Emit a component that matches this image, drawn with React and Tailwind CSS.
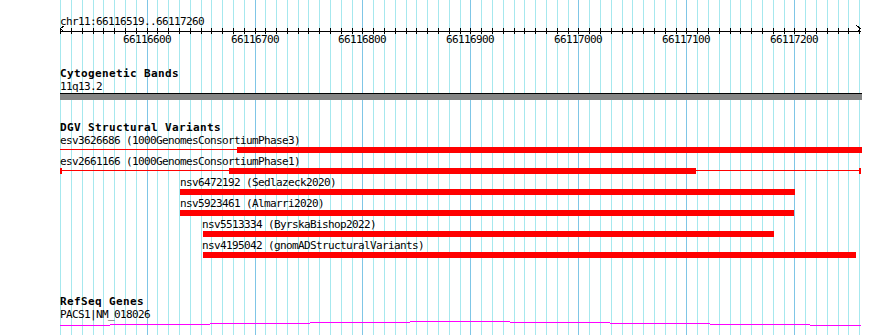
import React from 'react';

const START = 66116519;
const END = 66117260;
const SCALE = 800 / 741;
const LEFT = 60;

// screen x of a base position
const px = (bp) => Math.floor(59.6 + (bp - START) * SCALE);

const gridBp = [];
for (let bp = 66116520; bp <= END; bp += 10) gridBp.push(bp);

const majorBp = [66116600, 66116700, 66116800, 66116900, 66117000, 66117100, 66117200];

const variants = [
    { label: 'esv3626686 (1000GenomesConsortiumPhase3)', x: 60, thin: [60, 237], thick: [237, 862] },
    { label: 'esv2661166 (1000GenomesConsortiumPhase1)', x: 60, thin: [60, 860], thick: [229, 696], ends: [60, 859] },
    { label: 'nsv6472192 (Sedlazeck2020)', x: 180, thick: [180, 795] },
    { label: 'nsv5923461 (Almarri2020)', x: 180, thick: [180, 794] },
    { label: 'nsv5513334 (ByrskaBishop2022)', x: 202, thick: [203, 774] },
    { label: 'nsv4195042 (gnomADStructuralVariants)', x: 202, thick: [203, 856] },
];

// intron line of the gene, drawn as small steps
const geneSteps = [
    [60, 110, 4], [110, 210, 3], [210, 310, 2], [310, 410, 1], [410, 510, 0],
    [510, 610, 1], [610, 710, 2], [710, 810, 3], [810, 861, 4],
];

function Grid() {
    return (
        <svg className="absolute inset-0" width="890" height="335" shapeRendering="crispEdges">
            {gridBp.map((bp) => (
                <line
                    key={bp}
                    x1={px(bp) + 0.5}
                    x2={px(bp) + 0.5}
                    y1="0"
                    y2="335"
                    stroke={bp % 100 === 0 ? '#7fc6e6' : '#a6e8ee'}
                    strokeWidth="1"
                />
            ))}
        </svg>
    );
}

function Ruler() {
    return (
        <div className="flex flex-col">
            <div className="h-[13px] leading-[13px] text-[11px] tracking-[-0.62px] mt-[15px]">chr11:66116519..66117260</div>
            <svg width="802" height="6" shapeRendering="crispEdges" className="block">
                <line x1="0" x2="801" y1="3.5" y2="3.5" stroke="#000" />
                {gridBp.map((bp) => (
                    <line key={bp} x1={px(bp) - LEFT + 0.5} x2={px(bp) - LEFT + 0.5} y1="0" y2="6" stroke="#000" />
                ))}
            </svg>
            <svg width="802" height="8" className="absolute mt-[25px]" shapeRendering="crispEdges">
                <polyline points="4.5,0.5 0.5,3.5 4.5,7.5" fill="none" stroke="#000" />
                <polyline points="796.5,0.5 800.5,3.5 796.5,7.5" fill="none" stroke="#000" />
            </svg>
            <div className="relative h-[13px] leading-[13px] text-[11px] tracking-[-0.62px] -mt-px">
                {majorBp.map((bp) => (
                    <span key={bp} className="absolute top-0" style={{ left: px(bp) - LEFT - 24 }}>
                        {bp}
                    </span>
                ))}
            </div>
        </div>
    );
}

function TrackTitle({ children, className }) {
    return (
        <div className={'h-[13px] leading-[13px] text-[11px] font-bold tracking-[0.38px] ' + (className || '')}>
            {children}
        </div>
    );
}

function VariantRow({ v }) {
    return (
        <div className="flex flex-col mb-[2px]">
            <div className="h-[13px] leading-[13px] text-[11px] tracking-[-0.62px] whitespace-nowrap" style={{ paddingLeft: v.x - LEFT }}>
                {v.label}
            </div>
            <div className="relative h-[6px]">
                {v.thin && (
                    <div className="absolute top-[2px] h-px bg-[#ff0000]" style={{ left: v.thin[0] - LEFT, width: v.thin[1] - v.thin[0] }} />
                )}
                {v.ends &&
                    v.ends.map((x) => (
                        <div key={x} className="absolute top-0 h-[6px] w-[2px] bg-[#ff0000]" style={{ left: x - LEFT }} />
                    ))}
                <div className="absolute top-0 h-[6px] bg-[#ff0000]" style={{ left: v.thick[0] - LEFT, width: v.thick[1] - v.thick[0] }} />
            </div>
        </div>
    );
}

export default function App() {
    return (
        <div className="relative w-[890px] h-[335px] overflow-hidden bg-white text-black font-['DejaVu_Sans_Mono',monospace]">
            <Grid />
            <div className="relative flex flex-col pl-[60px] w-[862px]">
                <Ruler />

                {/* Cytogenetic Bands */}
                <TrackTitle className="mt-[21px]">Cytogenetic Bands</TrackTitle>
                <div className="h-[13px] leading-[13px] text-[11px] tracking-[-0.62px]">11q13.2</div>
                <div className="h-[7px] w-[802px] border-t border-black bg-[#858585]" />

                {/* DGV Structural Variants */}
                <TrackTitle className="mt-[21px]">DGV Structural Variants</TrackTitle>
                <div className="flex flex-col">
                    {variants.map((v) => (
                        <VariantRow key={v.label} v={v} />
                    ))}
                </div>

                {/* RefSeq Genes */}
                <TrackTitle className="mt-[35px] h-[12px]">RefSeq Genes</TrackTitle>
                <div className="h-[13px] leading-[13px] text-[11px] tracking-[-0.62px]">PACS1|NM_018026</div>
                <div className="relative h-[5px]">
                    {geneSteps.map(([a, b, y]) => (
                        <div
                            key={a}
                            className="absolute h-px bg-[#ff00ff]"
                            style={{ left: a - LEFT, width: b - a, top: y }}
                        />
                    ))}
                </div>
            </div>
        </div>
    );
}
